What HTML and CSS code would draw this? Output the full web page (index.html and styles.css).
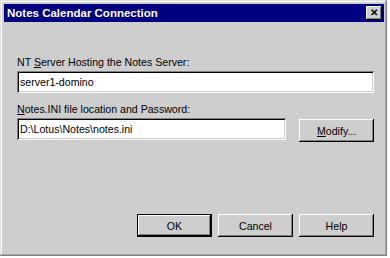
FILE: index.html
```html
<!DOCTYPE html>
<html lang="en">
<head>
  <meta charset="UTF-8" />
  <title>Notes Calendar Connection</title>
  <link rel="stylesheet" href="styles.css">
</head>
<body>
  <div class="window">
    <div class="titlebar">
      <span class="title">Notes Calendar Connection</span>
      <span class="close">&#x2715;</span>
    </div>
    <div class="content">
      <label class="label" for="server">NT <u>S</u>erver Hosting the Notes Server:</label>
      <input class="field field-wide" id="server" type="text" value="server1-domino" />

      <label class="label label-second" for="ini"><u>N</u>otes.INI file location and Password:</label>
      <div class="row">
        <input class="field field-ini" id="ini" type="text" value="D:\Lotus\Notes\notes.ini" />
        <button class="btn"><u>M</u>odify...</button>
      </div>

      <div class="actions">
        <button class="btn btn-default">OK</button>
        <button class="btn">Cancel</button>
        <button class="btn">Help</button>
      </div>
    </div>
  </div>
</body>
</html>
```

FILE: styles.css
```css
body {
  margin: 0;
  padding: 0;
  background: #fff;
  font-family: "Liberation Sans", Arial, sans-serif;
  font-size: 10.6px;
  color: #000;
}
.window {
  width: 387px;
  height: 256px;
  box-sizing: border-box;
  padding: 4px 3px 3px 4px;
  background: #cecece;
  display: flex;
  flex-direction: column;
  box-shadow: inset -1px -1px #808080, inset 1px 1px #dfdfdf,
              inset -2px -2px #a8a8a8, inset 2px 2px #fff;
}
.titlebar {
  height: 18px;
  background: #000080;
  color: #fff;
  display: flex;
  align-items: center;
  justify-content: space-between;
  padding: 0 2px 0 3px;
}
.title {
  font-weight: bold;
  font-size: 11.5px;
}
.close {
  width: 16px;
  height: 14px;
  box-sizing: border-box;
  background: #cecece;
  color: #000;
  font-size: 10px;
  font-weight: bold;
  line-height: 14px;
  text-align: center;
  box-shadow: inset -1px -1px #000, inset 1px 1px #fff, inset -2px -2px #808080;
}
.content {
  flex: 1;
  display: flex;
  flex-direction: column;
  padding: 34px 10px 16px 13px;
}
.label {
  display: block;
  line-height: 13px;
  margin-bottom: 2px;
}
.label-second {
  margin-top: 10px;
}
.field {
  height: 22px;
  box-sizing: border-box;
  border: none;
  outline: none;
  margin: 0;
  padding: 2px 3px;
  background: #fff;
  font-family: inherit;
  font-size: 10.6px;
  color: #000;
  box-shadow: inset 1px 1px #808080, inset -1px -1px #fff,
              inset 2px 2px #000, inset -2px -2px #cecece;
}
.field-wide {
  width: 357px;
}
.row {
  display: flex;
  gap: 13px;
  align-items: flex-start;
}
.field-ini {
  width: 270px;
}
.row .btn {
  margin-top: 1px;
}
.btn {
  width: 75px;
  height: 23px;
  box-sizing: border-box;
  border: none;
  padding: 0;
  background: #cecece;
  font-family: inherit;
  font-size: 10.6px;
  color: #000;
  box-shadow: inset -1px -1px #000, inset 1px 1px #fff, inset -2px -2px #808080;
}
.btn-default {
  box-shadow: inset 0 0 0 1px #000, inset -2px -2px #000,
              inset 2px 2px #fff, inset -3px -3px #808080;
}
.actions {
  margin-top: auto;
  display: flex;
  justify-content: flex-end;
  gap: 6px;
}
```
